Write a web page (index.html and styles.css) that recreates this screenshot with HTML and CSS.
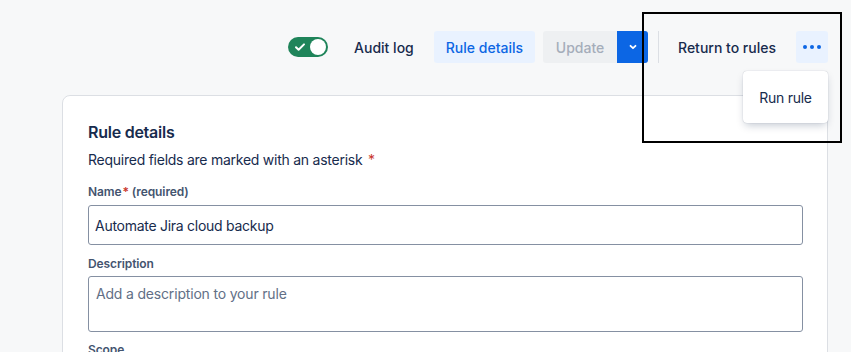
FILE: index.html
```html
<!DOCTYPE html>
<html lang="en">
<head>
  <meta charset="UTF-8">
  <meta name="viewport" content="width=device-width, initial-scale=1.0">
  <title>Rule details</title>
  <link rel="stylesheet" href="styles.css">
</head>
<body>
  <!-- Barre d'actions -->
  <div class="toolbar">
    <span class="toggle" aria-label="Enabled">
      <svg class="toggle-check" width="12" height="12" viewBox="0 0 12 12"><path d="M2 6.2l2.6 2.6L10 3.4" fill="none" stroke="#fff" stroke-width="2" stroke-linecap="round" stroke-linejoin="round"/></svg>
      <span class="toggle-knob"></span>
    </span>
    <button class="btn btn-subtle audit">Audit log</button>
    <button class="btn btn-selected">Rule details</button>
    <div class="split">
      <button class="btn btn-disabled">Update</button>
      <button class="btn btn-primary split-arrow">
        <svg width="12" height="12" viewBox="0 0 12 12"><path d="M3.5 4.8L6 7.2l2.5-2.4" fill="none" stroke="#fff" stroke-width="1.8" stroke-linecap="round" stroke-linejoin="round"/></svg>
      </button>
    </div>
    <span class="divider"></span>
    <button class="btn btn-subtle">Return to rules</button>
    <div class="more-wrap">
      <button class="btn btn-selected more">
        <svg width="20" height="6" viewBox="0 0 20 6"><circle cx="3" cy="3" r="2" fill="#0c66e4"/><circle cx="10" cy="3" r="2" fill="#0c66e4"/><circle cx="17" cy="3" r="2" fill="#0c66e4"/></svg>
      </button>
      <div class="menu">
        <div class="menu-item">Run rule</div>
      </div>
    </div>
  </div>

  <!-- Carte du formulaire -->
  <div class="card">
    <h2 class="card-title">Rule details</h2>
    <p class="hint">Required fields are marked with an asterisk <span class="req">*</span></p>

    <label class="field-label name-label">Name<span class="req">*</span> (required)</label>
    <input class="field" type="text" value="Automate Jira cloud backup">

    <label class="field-label desc-label">Description</label>
    <textarea class="field area" placeholder="Add a description to your rule"></textarea>

    <label class="field-label scope-label">Scope</label>
  </div>

  <!-- Cadre d'annotation -->
  <div class="highlight"></div>
</body>
</html>
```

FILE: styles.css
```css
body {
  margin: 0;
  height: 352px;
  overflow: hidden;
  background: #f7f8f9;
  font-family: Inter, "Noto Sans", sans-serif;
  color: #172b4d;
  letter-spacing: -0.25px;
  position: relative;
}
.toolbar {
  display: flex;
  align-items: center;
  justify-content: flex-end;
  gap: 8px;
  padding: 31px 23px 0 0;
  height: 32px;
}
.toggle {
  width: 40px;
  height: 20px;
  border-radius: 10px;
  background: #1f845a;
  display: flex;
  align-items: center;
  justify-content: space-between;
  padding: 0 2px 0 6px;
  box-sizing: border-box;
  margin-right: 6px;
}
.toggle-knob {
  width: 16px;
  height: 16px;
  border-radius: 50%;
  background: #fff;
}
.btn {
  height: 32px;
  border: none;
  border-radius: 3px;
  padding: 0 12px;
  font-family: inherit;
  font-size: 14px;
  font-weight: 500;
  letter-spacing: 0;
  background: transparent;
  color: #172b4d;
  display: flex;
  align-items: center;
  justify-content: center;
}
.btn-selected {
  background: #e9f2ff;
  color: #0c66e4;
}
.btn-disabled {
  background: #eef0f2;
  color: #a5adba;
  width: 74px;
  border-radius: 3px 0 0 3px;
}
.btn-primary {
  background: #0c66e4;
}
.split {
  display: flex;
}
.split-arrow {
  width: 31px;
  padding: 0;
  border-radius: 0 3px 3px 0;
}
.divider {
  width: 1px;
  height: 32px;
  background: #dcdfe4;
  margin: 0 -1px 0 2px;
}
.more-wrap {
  position: relative;
}
.more {
  width: 32px;
  padding: 0;
}
.menu {
  position: absolute;
  top: 40px;
  right: 0;
  width: 85px;
  height: 52px;
  background: #fff;
  border-radius: 4px;
  box-shadow: 0 4px 8px -2px rgba(9, 30, 66, 0.25), 0 0 1px rgba(9, 30, 66, 0.31);
  display: flex;
  align-items: center;
  justify-content: center;
  z-index: 2;
}
.menu-item {
  font-size: 14px;
  color: #172b4d;
}
.card {
  margin: 32px 23px 0 62px;
  background: #fff;
  border: 1px solid #dcdfe4;
  border-radius: 8px;
  padding: 26px 24px 40px 25px;
  height: 400px;
}
.card-title {
  margin: 0;
  font-size: 16px;
  line-height: 20px;
  font-weight: 600;
}
.hint {
  margin: 8px 0 0;
  font-size: 14px;
  line-height: 20px;
}
.req {
  color: #c9372c;
  margin-left: 2px;
}
.field-label {
  display: block;
  font-size: 12px;
  line-height: 16px;
  font-weight: 600;
  color: #44546f;
  letter-spacing: -0.1px;
}
.name-label {
  margin-top: 14px;
}
.name-label .req {
  margin: 0 0 0 1px;
}
.field {
  display: block;
  box-sizing: border-box;
  width: 100%;
  height: 40px;
  margin-top: 5px;
  border: 1px solid #8590a2;
  border-radius: 3px;
  padding: 0 6px;
  font-family: inherit;
  font-size: 14px;
  letter-spacing: -0.27px;
  color: #172b4d;
  background: #fff;
}
.desc-label {
  margin-top: 11px;
}
.area {
  height: 56px;
  margin-top: 4px;
  padding: 7px 7px;
  line-height: 20px;
  letter-spacing: -0.18px;
  resize: none;
}
.area::placeholder {
  color: #626f86;
}
.scope-label {
  margin-top: 10px;
}
.highlight {
  position: absolute;
  left: 642px;
  top: 12px;
  width: 196px;
  height: 127px;
  border: 2px solid #000;
  z-index: 3;
}
```
